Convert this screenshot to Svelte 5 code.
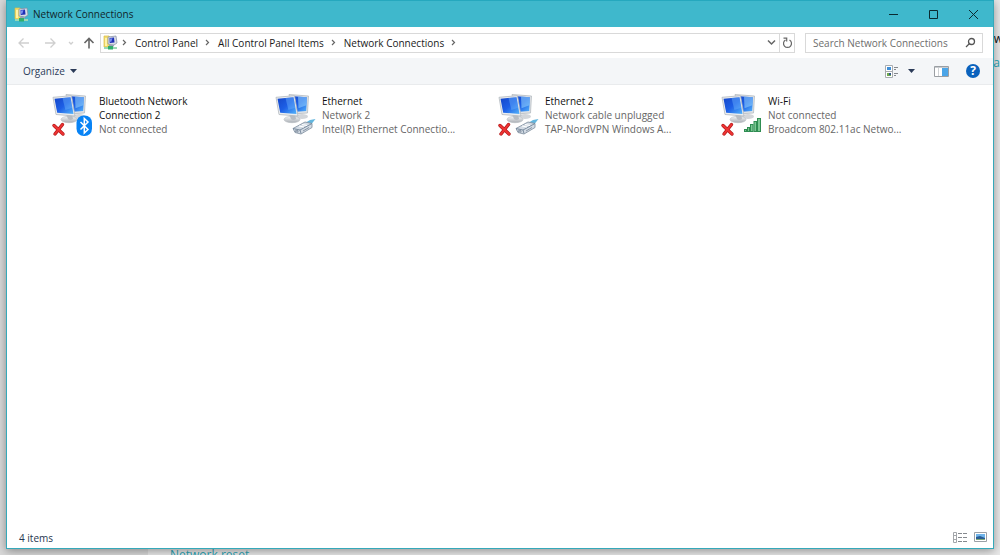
<script>
  const crumbs = ['Control Panel', 'All Control Panel Items', 'Network Connections'];
  const items = [
    { name: 'Bluetooth Network Connection 2', lines: ['Not connected'], badge: 'bluetooth', off: true },
    { name: 'Ethernet', lines: ['Network 2', 'Intel(R) Ethernet Connectio...'], badge: 'cable', off: false },
    { name: 'Ethernet 2', lines: ['Network cable unplugged', 'TAP-NordVPN Windows A...'], badge: 'cable', off: true },
    { name: 'Wi-Fi', lines: ['Not connected', 'Broadcom 802.11ac Netwo...'], badge: 'wifi', off: true }
  ];
  let query = $state('');
</script>

{#snippet folderIcon()}
  <svg class="folder" width="15" height="15" viewBox="0 0 15 15" aria-hidden="true">
    <path d="M1 1h5l1 1v10H1z" fill="#f3dc6b" stroke="#d8bb48" stroke-width=".7" />
    <path d="M2 3h2v8H2z" fill="#fff3a8" />
    <path d="M5 2l8-1 1 7-3 2-6-1z" fill="#d9dde6" stroke="#8089a0" stroke-width=".7" />
    <path d="M6.500 3l4.500-.6.5 5-4.800.5z" fill="#1f2fb4" />
    <path d="M7 3.600l2.500-.4-1.200 3.600H7z" fill="#7a90f0" />
    <path d="M6 10h5v1.500H6z" fill="#9aa4b4" />
    <path d="M1 12h13v2H1z" fill="#9ad9b4" />
    <path d="M5 11h5v3.500H5z" fill="#2fae6c" />
  </svg>
{/snippet}

{#snippet deviceIcon(badge, off)}
  <svg class="device" width="42" height="46" viewBox="0 0 42 46" aria-hidden="true">
    <defs>
      <linearGradient id="screen" x1="0" y1="0" x2="1" y2="1">
        <stop offset="0" stop-color="#1546c8" />
        <stop offset=".5" stop-color="#1d5fe6" />
        <stop offset="1" stop-color="#54b4fb" />
      </linearGradient>
      <linearGradient id="metal" x1="0" y1="0" x2="0" y2="1">
        <stop offset="0" stop-color="#f6f7f8" />
        <stop offset="1" stop-color="#a9aeb4" />
      </linearGradient>
    </defs>
    <ellipse cx="28" cy="24.500" rx="6" ry="2.500" fill="#d3d6da" />
    <path d="M15 2.500L34.500 4l-1 17L18 22z" fill="#dfe2e6" stroke="#aeb4ba" stroke-width=".7" />
    <path d="M16.500 4l16.500 1.300-.800 13.700L19 20z" fill="url(#screen)" />
    <path d="M24 4.600l9 .7-.500 8-8 3z" fill="#8ccbfc" opacity=".6" />
    <ellipse cx="18" cy="27.500" rx="8" ry="3.200" fill="url(#metal)" stroke="#b9bdc2" stroke-width=".6" />
    <path d="M15 22l6-1 1 6c-1.500 1.300-4 1.300-5 0z" fill="#b8bdc3" />
    <path d="M2 5.300L20.500 3.700 24 24 5 22.500z" fill="#eceef0" stroke="#b1b7be" stroke-width=".8" />
    <path d="M3.500 6.700L19.500 5.200l3 16.800L6.200 20.700z" fill="url(#screen)" />
    <path d="M11.500 6l8-.8 1.900 10.500-7 2.300z" fill="#67adfb" opacity=".48" />
    {#if off}
      <path d="M3 33.500L12 42M11.500 32.500L4 42" fill="none" stroke="#b51a1a" stroke-width="3.400" stroke-linecap="round" />
      <path d="M3 33.500L12 42M11.500 32.500L4 42" fill="none" stroke="#ee3434" stroke-width="2" stroke-linecap="round" />
    {/if}
    {#if badge === 'bluetooth'}
      <rect x="25.500" y="23.500" width="15.500" height="20.500" rx="7.200" fill="#0883f5" />
      <path d="M29.500 30l7.500 7.500-3.700 3.500V26.500L37 30l-7.500 7.500" fill="none" stroke="#fff" stroke-width="1.500" />
    {:else if badge === 'cable'}
      <path d="M31 31l5-3 5.500-1-4 5-4 1z" fill="#63b6de" />
      <path d="M19 36.500l12-6.500 7 1.500v4l-11 6.500-6-1.500z" fill="#d3dbe4" stroke="#8795a5" stroke-width=".9" />
      <path d="M19 36.500l7 1.500 12-6.500M26 38l1 3.500" fill="none" stroke="#708397" stroke-width=".9" />
      <path d="M25 34l5 1M28 32.500l5 1" stroke="#fff" stroke-width="1.200" />
      <path d="M29 39l6-3.500M21 38l3 .700v1.500l-3-.7" fill="none" stroke="#8795a5" stroke-width="1" />
    {:else}
      <g fill="#7cc793" stroke="#2f8d52" stroke-width="1">
        <rect x="24.500" y="37.500" width="2" height="2" />
        <rect x="27.500" y="35.500" width="2" height="4" />
        <rect x="30.500" y="32.500" width="2.500" height="7" />
        <rect x="34" y="29.500" width="2.500" height="10" />
        <rect x="37.500" y="26.500" width="3" height="13" />
      </g>
    {/if}
  </svg>
{/snippet}

<div class="desktop">
  <div class="behind" aria-hidden="true">
    <div class="side"></div>
    <div class="page">
      <span class="peek-dark">w</span>
      <span class="peek-link">oa</span>
      <a class="reset" href="#reset" tabindex="-1">Network reset</a>
    </div>
  </div>

  <main class="window">
    <header class="title">
      {@render folderIcon()}
      <h1>Network Connections</h1>
      <div class="controls">
        <button aria-label="Minimize"><svg width="11" height="11"><path d="M1 5.500h9" /></svg></button>
        <button aria-label="Maximize"><svg width="11" height="11"><path d="M1.500 1.500h8v8h-8z" /></svg></button>
        <button aria-label="Close"><svg width="11" height="11"><path d="M1 1l9 9M10 1l-9 9" /></svg></button>
      </div>
    </header>

    <div class="nav">
      <div class="arrows">
        <button aria-label="Back" disabled><svg width="12" height="12"><path d="M11 6H1M5.500 1.500L1 6l4.500 4.500" /></svg></button>
        <button aria-label="Forward" disabled><svg width="12" height="12"><path d="M1 6h10M6.500 1.500L11 6l-4.500 4.500" /></svg></button>
        <button class="recent" aria-label="Recent locations" disabled><svg width="6" height="6"><path d="M1 2l2 2 2-2" /></svg></button>
        <button class="up" aria-label="Up"><svg width="12" height="12"><path d="M6 11.500V1.500M1.500 6L6 1.500 10.500 6" /></svg></button>
      </div>
      <nav class="address" aria-label="Address">
        {@render folderIcon()}
        <svg class="sep" width="5" height="7"><path d="M1 1l2.500 2.500L1 6" /></svg>
        {#each crumbs as crumb}
          <a href="#location">{crumb}</a>
          <svg class="sep" width="5" height="7"><path d="M1 1l2.500 2.500L1 6" /></svg>
        {/each}
        <button class="drop" aria-label="Previous locations"><svg width="9" height="7"><path d="M1 1.500l3.500 3.500L8 1.500" /></svg></button>
        <button class="refresh" aria-label="Refresh">
          <svg width="11" height="12"><path d="M7.500 3A4 4 0 1 1 3.500 3M1.500 1.200h3.200v3.300" /></svg>
        </button>
      </nav>
      <label class="search">
        <input type="text" aria-label="Search Network Connections" placeholder="Search Network Connections" bind:value={query} />
        <svg width="11" height="11"><circle cx="6.500" cy="4.500" r="3" /><path d="M4.500 6.500L1 10" /></svg>
      </label>
    </div>

    <div class="toolbar">
      <button class="organize">Organize <svg width="7" height="4"><path d="M0 0h7L3.500 4z" /></svg></button>
      <div class="tools">
        <button aria-label="Change your view">
          <svg width="14" height="13">
            <path d="M.5.5h7v12h-7zM.5 6.500h7" fill="#fff" stroke="#a8acb0" />
            <path d="M2 2h4v3H2z" fill="#3f8fd8" /><path d="M2 8h4v3H2z" fill="#6fa84f" /><path d="M4 8h2v2H4z" fill="#32568c" />
            <path d="M9 2.500h4M9 4.500h2M9 8.500h4M9 10.500h2" stroke="#85898e" />
          </svg>
        </button>
        <button class="more" aria-label="More options"><svg width="7" height="4"><path d="M0 0h7L3.500 4z" /></svg></button>
        <button class="pane" aria-label="Show the preview pane">
          <svg width="15" height="11">
            <path d="M.5.5h14v10H.5z" fill="#fff" stroke="#9a9ea3" /><path d="M1 1h13v1H1z" fill="#c9ccd0" />
            <path d="M8 2h6v8H8z" fill="#4ba5e8" /><path d="M4.500 2v8" stroke="#cfd2d5" />
          </svg>
        </button>
        <button class="help" aria-label="Help">?</button>
      </div>
    </div>

    <ul class="items">
      {#each items as item}
        <li>
          {@render deviceIcon(item.badge, item.off)}
          <div class="text">
            <span class="name">{item.name}</span>
            {#each item.lines as line}<span class="line">{line}</span>{/each}
          </div>
        </li>
      {/each}
    </ul>

    <footer class="status">
      <span>4 items</span>
      <div class="views">
        <button aria-label="Details view">
          <svg width="14" height="11">
            <path d="M.5.500h3v10h-3zM.5 3.500h3M.5 7.500h3" fill="none" stroke="#a3a6aa" />
            <path d="M5 1.500h4M10 1.500h4M5 5.500h4M10 5.500h4M5 9.500h4M10 9.500h4" stroke="#85898e" />
          </svg>
        </button>
        <button aria-label="Large icons view">
          <svg width="13" height="11">
            <path d="M.5.5h12v9H.5z" fill="#fff" stroke="#9ba0a6" />
            <path d="M2 2h9v6H2z" fill="#6fb4ea" /><path d="M2 5l4-1 5 2v2H2z" fill="#2a5c94" /><path d="M2 7h9v1H2z" fill="#7fa779" />
          </svg>
        </button>
      </div>
    </footer>
  </main>
</div>

<style>
  :global(body) { margin: 0; }
  * { box-sizing: border-box; }
  .desktop {
    position: relative;
    display: flex;
    min-height: 100vh;
    padding: 0 6px 6px;
    overflow: hidden;
    font: 10px/14px "Open Sans", "Noto Sans", sans-serif;
    color: #1a1a1a;
  }
  .behind { position: absolute; inset: 0; display: flex; background: #e9e9e9; }
  .side { width: 148px; background: #d9d9d9; }
  .page { position: relative; flex: 1; overflow: hidden; }
  .peek-dark, .peek-link { position: absolute; right: 0; font-size: 12px; }
  .peek-dark { top: 32px; right: -3px; color: #111; }
  .peek-link { top: 56px; right: 0; color: #2aa5b5; }
  .reset { position: absolute; left: 22px; bottom: -9px; font-size: 12px; line-height: 18px; color: #2aa5b5; text-decoration: none; }

  .window {
    position: relative;
    flex: 1;
    min-width: 0;
    display: flex;
    flex-direction: column;
    background: #fff;
    border: 1px solid #35a9ba;
    border-top-color: #25a8be;
    box-shadow: 0 2px 9px rgba(0, 0, 0, .38);
  }
  button { border: 0; padding: 0; background: none; font: inherit; color: inherit; display: flex; align-items: center; justify-content: center; }
  svg { flex: none; display: block; }

  .title { display: flex; align-items: center; height: 26px; padding-left: 7px; gap: 4px; background: #3fb8cc; color: #10262b; }
  h1 { margin: 0; font: inherit; }
  .controls { display: flex; margin-left: auto; }
  .controls button { width: 40px; height: 26px; }
  .controls svg { fill: none; stroke: #0b2a30; }

  .nav { display: flex; align-items: center; height: 31px; padding-right: 10px; }
  .arrows { display: flex; align-items: center; width: 93px; padding-left: 11px; gap: 14px; }
  .arrows svg { fill: none; stroke: #cfcfcf; stroke-width: 1.3; }
  .arrows .recent { margin: 0 -5px 0 -2px; }
  .arrows .up svg { stroke: #666; stroke-width: 1.600; }
  .address { flex: 1; min-width: 0; display: flex; align-items: center; height: 20px; padding-left: 2px; border: 1px solid #d9d9d9; white-space: nowrap; }
  .address a { color: #1a1a1a; text-decoration: none; margin: 0 7px 0 8px; }
  .sep { fill: none; stroke: #666; stroke-width: 1.200; }
  .folder + .sep { margin-left: 4px; }
  .drop { margin-left: auto; width: 15px; }
  .drop svg { fill: none; stroke: #666; stroke-width: 1.500; }
  .refresh { width: 15px; height: 18px; border-left: 1px solid #d9d9d9; }
  .refresh svg { fill: none; stroke: #666; stroke-width: 1.200; }
  .search { display: flex; align-items: center; width: 178px; height: 20px; margin-left: 10px; padding: 0 6px 0 7px; border: 1px solid #d9d9d9; }
  .search input { flex: 1; min-width: 0; border: 0; padding: 0; outline: 0; font: inherit; background: none; color: #222; }
  .search input::placeholder { color: #6d6d6d; opacity: 1; }
  .search svg { fill: none; stroke: #555; stroke-width: 1.300; }

  .toolbar { display: flex; align-items: center; justify-content: space-between; height: 27px; padding: 0 13px 0 16px; background: #f4f6f8; border-bottom: 1px solid #e9ebed; color: #2b3b58; }
  .organize { gap: 5px; }
  .organize svg, .more svg { fill: #2b3b58; }
  .tools { display: flex; align-items: center; }
  .more { margin: 0 19px 0 9px; }
  .pane { margin-right: 17px; }
  .help { width: 14px; height: 14px; border-radius: 50%; background: #0a62bd; color: #fff; font-size: 12px; font-weight: 700; }

  .items { flex: 1; display: grid; grid-template-columns: repeat(auto-fill, 223px); align-content: start; gap: 8px 0; margin: 0; padding: 7px 8px 7px 44px; list-style: none; }
  li { display: flex; gap: 6px; }
  .text { display: flex; flex-direction: column; width: 140px; padding-top: 2px; }
  .name { color: #111; }
  .text .name { max-width: 120px; }
  .line { color: #666; white-space: nowrap; }

  .status { display: flex; align-items: center; justify-content: space-between; height: 21px; padding: 0 6px 0 12px; color: #26354f; }
  .views { display: flex; gap: 7px; }
</style>
